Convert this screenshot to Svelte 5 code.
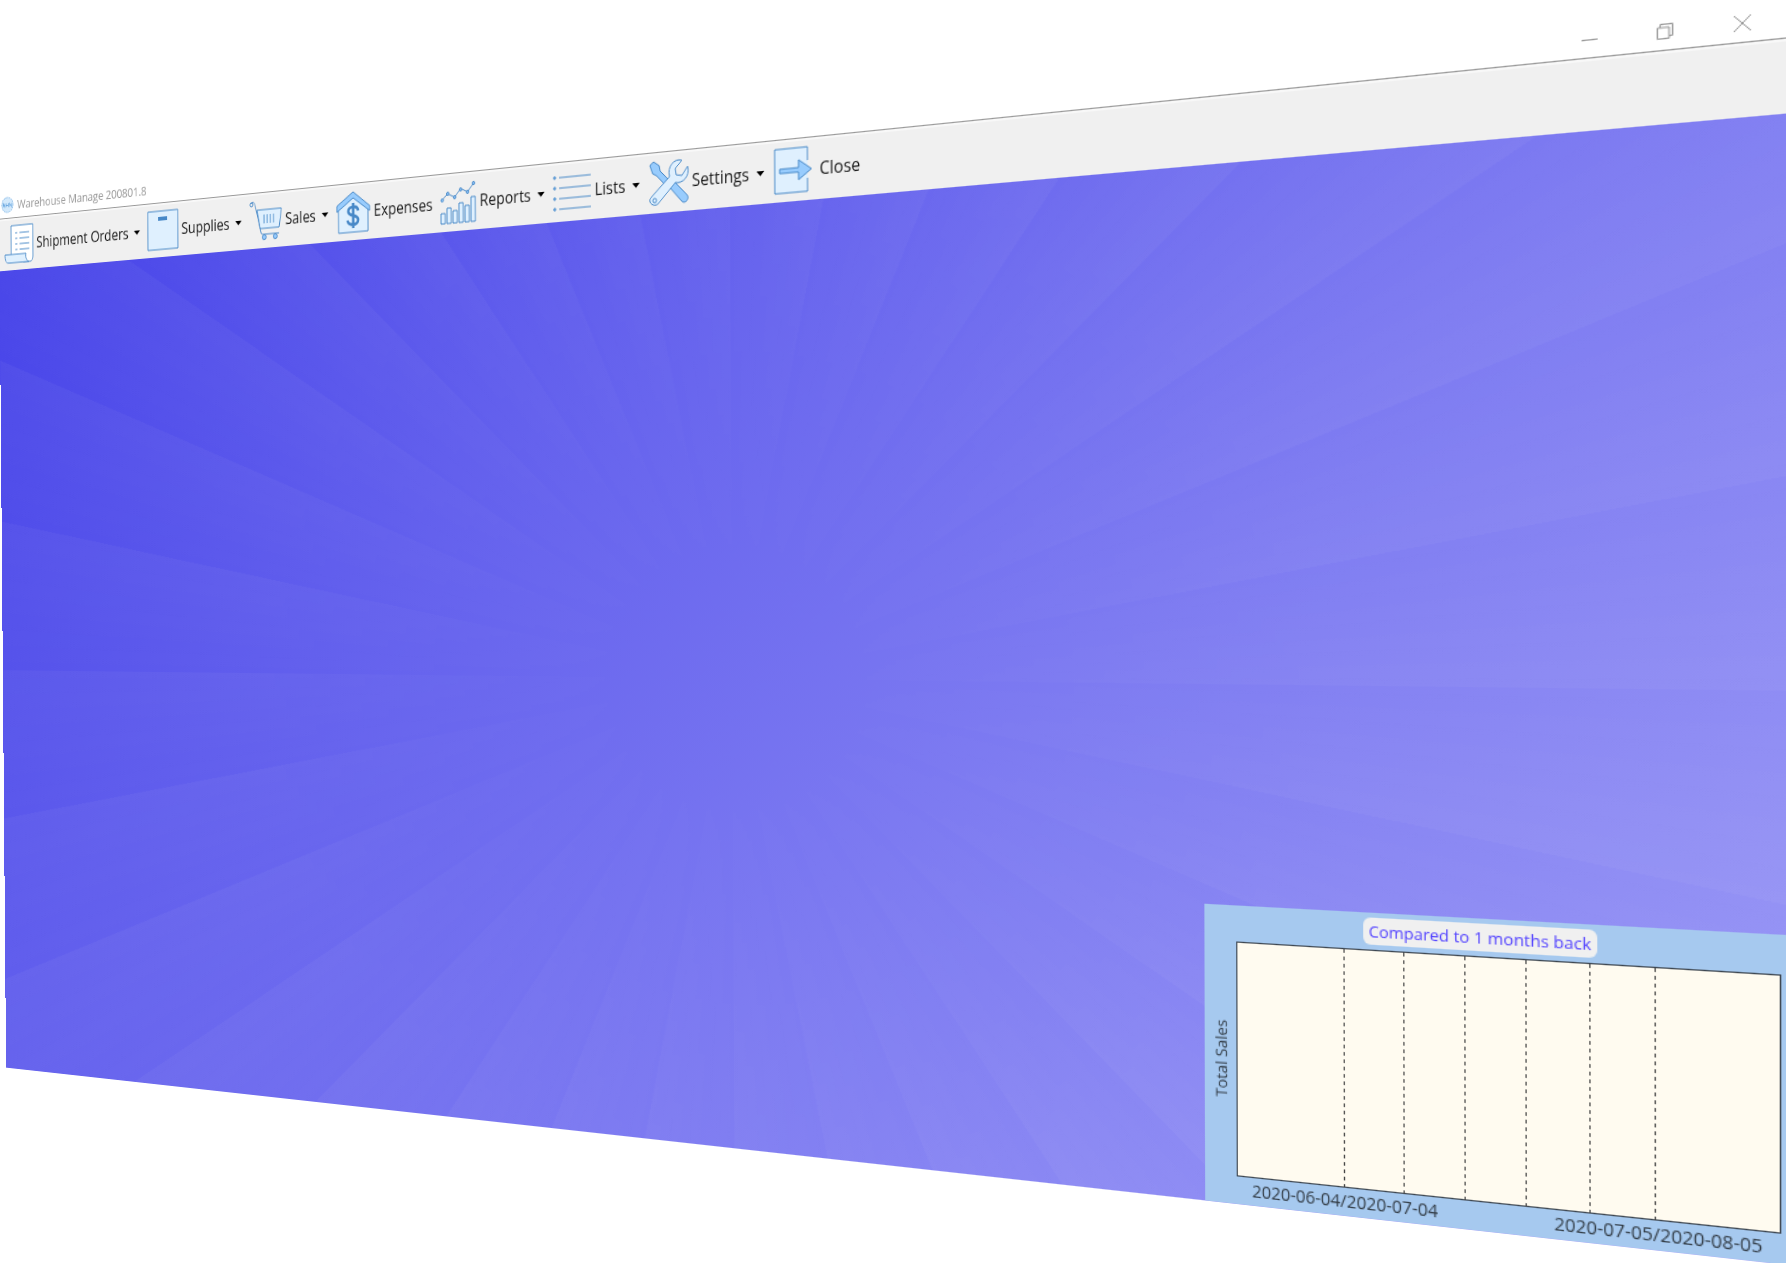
<script lang="ts">
  type Item = { label: string; icon: string; menu: boolean };

  const items: Item[] = [
    { label: 'Shipment Orders', icon: 'orders', menu: true },
    { label: 'Supplies', icon: 'supplies', menu: true },
    { label: 'Sales', icon: 'sales', menu: true },
    { label: 'Expenses', icon: 'expenses', menu: false },
    { label: 'Reports', icon: 'reports', menu: true },
    { label: 'Lists', icon: 'lists', menu: true },
    { label: 'Settings', icon: 'settings', menu: true },
    { label: 'Close', icon: 'close', menu: false }
  ];
  const periods = ['2020-06-04/2020-07-04', '2020-07-05/2020-08-05'];
  const gridLines = [0, 1, 2, 3, 4, 5];

  // Corners of the tilted window as fractions of the stage: TL, TR, BR, BL.
  const corners = [
    [-0.0006, 0.152],
    [1.0006, -0.0012],
    [1.0006, 1.0015],
    [0.0034, 0.8453]
  ];

  let stageW = $state(0);
  let stageH = $state(0);
  let winW = $state(0);
  let winH = $state(0);

  // Projective map from the flat window to the four corners.
  const tilt = $derived.by(() => {
    if (!stageW || !stageH || !winW || !winH) return 'none';
    const [[x0, y0], [x1, y1], [x2, y2], [x3, y3]] = corners.map(([x, y]) => [x * stageW, y * stageH]);
    const dx1 = x1 - x2, dy1 = y1 - y2;
    const dx2 = x3 - x2, dy2 = y3 - y2;
    const sx = x0 - x1 + x2 - x3, sy = y0 - y1 + y2 - y3;
    const den = dx1 * dy2 - dx2 * dy1;
    const g = (sx * dy2 - dx2 * sy) / den;
    const h = (dx1 * sy - sx * dy1) / den;
    const m = [
      (x1 - x0 + g * x1) / winW, (y1 - y0 + g * y1) / winW, 0, g / winW,
      (x3 - x0 + h * x3) / winH, (y3 - y0 + h * y3) / winH, 0, h / winH,
      0, 0, 1, 0,
      x0, y0, 0, 1
    ];
    return `matrix3d(${m.map((n) => n.toFixed(10)).join(',')})`;
  });
</script>

<div class="stage" bind:clientWidth={stageW} bind:clientHeight={stageH}>
  <div class="window" bind:clientWidth={winW} bind:clientHeight={winH} style:transform={tilt}>
    <header class="titlebar">
      <svg class="app-icon" viewBox="0 0 20 20" aria-hidden="true">
        <circle cx="10" cy="10" r="9" fill="#d3e9fb" stroke="#7db4e6" stroke-dasharray="2 1" />
        <path d="M3.5 12.500V8l2.500 4.500V8M8 12.500V8M8 10.500h3.500M11.500 8v4.500M13.500 12.500V8l3 4.500V8" fill="none" stroke="#6da9e0" />
      </svg>
      <h1>Warehouse Manage 200801.8</h1>
      <div class="controls">
        <button aria-label="Minimize"><svg viewBox="0 0 12 12"><path d="M0 6.500h12" /></svg></button>
        <button aria-label="Restore"><svg viewBox="0 0 12 12"><path d="M.5 3h8.500v8.500H.500zM2.500 3V.500h9V9.500H9" /></svg></button>
        <button aria-label="Close window"><svg viewBox="0 0 12 12"><path d="M0 0l12 12M12 0L0 12" /></svg></button>
      </div>
    </header>

    <nav class="toolbar">
      {#each items as item}
        <button class="tool">
          <svg class="icon" viewBox="0 0 42 42" aria-hidden="true">
            {#if item.icon === 'orders'}
              <path class="white" d="M10 34V1h31v34c0 3-1 6-4 6H28z" />
              <path class="light" d="M1 32h30c-1 5 1 8 4 9H6c-4 0-5-4-5-9z" />
              <path class="line" d="M16 9h3M22 9h14M16 15h3M22 15h14M16 21h3M22 21h14M16 27h3M22 27h14" />
            {:else if item.icon === 'supplies'}
              <path class="light" d="M1 1h40v40H1z" />
              <path class="thick" d="M15 9h12" />
            {:else if item.icon === 'sales'}
              <path class="light" d="M10 10h31l-3 19H14z" />
              <circle class="line" cx="3" cy="4" r="2" />
              <path class="line" d="M2 3c3-3 5-1 6 3l7 27c0 2 2 2 4 2h19M19 15v9M23 15v9M27 15v9M31 15v9" />
              <circle class="mid" cx="19" cy="38" r="2.500" /><circle class="mid" cx="33" cy="38" r="2.500" />
            {:else if item.icon === 'expenses'}
              <path class="light" d="M3 16L21 3l18 13v25H3z" />
              <path class="mid" d="M1 14L21 1l20 15v5L21 7 1 20z" />
              <path class="dollar" d="M27 20c-1-6-12-5-12 0 0 6 12 3 12 9 0 6-12 6-13 0M21 12v25" />
            {:else if item.icon === 'reports'}
              <path class="light" d="M1 31h5v10H1zM8 26h5v15H8zM15 29h5v12h-5zM22 22h5v19h-5zM29 25h5v16h-5zM36 17h5v24h-5z" />
              <path class="line" d="M2 18l7-6 8 4 7-8 8 4 7-8" />
              <circle class="mid" cx="2.500" cy="18" r="1.500" /><circle class="mid" cx="9" cy="12" r="1.500" /><circle class="mid" cx="17" cy="16" r="1.500" />
              <circle class="mid" cx="24" cy="9" r="1.500" /><circle class="mid" cx="32" cy="12" r="1.500" /><circle class="mid" cx="39" cy="4" r="1.500" />
            {:else if item.icon === 'lists'}
              <path class="line" d="M7 7h35M7 17h35M7 27h35M7 37h35" />
              <circle class="mid" cx="2" cy="7" r="1.200" /><circle class="mid" cx="2" cy="17" r="1.200" /><circle class="mid" cx="2" cy="27" r="1.200" /><circle class="mid" cx="2" cy="37" r="1.200" />
            {:else if item.icon === 'settings'}
              <path class="mid" d="M1 4l4-3 6 4 1 5 13 13-4 4L8 14 4 12z" />
              <path class="mid" d="M23 27l5-5 12 12c4 4-2 9-5 6z" />
              <path class="light" d="M2 34l20-18c-3-9 5-17 13-14l-7 7 1 6 6 1 6-8c3 9-5 16-13 14L10 40c-5 4-12-2-8-6z" />
              <circle class="light" cx="6" cy="37" r="2" />
            {:else}
              <path class="light" d="M34 13V1H1v40h33V29" />
              <path class="mid" d="M6 19h19v-7l13 9-13 9v-7H6z" />
            {/if}
          </svg>
          <span>{item.label}</span>
          {#if item.menu}<i class="arrow"></i>{/if}
        </button>
      {/each}
    </nav>

    <main class="canvas">
      <section class="chart" aria-label="Total sales comparison">
        <h2>Compared to 1 months back</h2>
        <div class="y-label"><span>Total Sales</span></div>
        <div class="plot">
          {#each gridLines as line (line)}<div class="grid-line"></div>{/each}
        </div>
        <div class="x-labels">
          {#each periods as period}<span>{period}</span>{/each}
        </div>
      </section>
    </main>
  </div>
</div>

<style>
  :global(body) {
    margin: 0;
    background: #fff;
  }
  .stage {
    height: 100vh;
    overflow: hidden;
    font-family: 'Open Sans', 'Noto Sans', sans-serif;
  }
  .window {
    display: flex;
    flex-direction: column;
    width: 100%;
    height: 75.4%;
    transform-origin: 0 0;
  }
  button {
    display: flex;
    align-items: center;
    padding: 0;
    border: 0;
    background: none;
    color: inherit;
    font: inherit;
  }
  .titlebar {
    display: flex;
    align-items: center;
    flex: none;
    height: 29px;
    padding: 0 4px 0 3px;
    background: #fff;
    color: #999;
  }
  .app-icon {
    width: 18px;
    height: 18px;
    margin-right: 5px;
  }
  h1 {
    margin: 0;
    font-size: 13px;
    font-weight: 400;
    line-height: 20px;
  }
  .controls {
    display: flex;
    align-self: stretch;
    margin-left: auto;
  }
  .controls button {
    justify-content: center;
    width: 55px;
  }
  .controls svg {
    width: 12px;
    height: 12px;
    fill: none;
    stroke: #999;
    stroke-width: 1;
  }
  .toolbar {
    display: flex;
    flex: none;
    gap: 9px;
    box-sizing: border-box;
    height: 57px;
    padding-left: 7px;
    border-top: 1px solid #999;
    box-shadow: inset 0 2px #f8f8f8;
    background: #f0f0f0;
    color: #1a1a1a;
    font-size: 16px;
    line-height: 24px;
  }
  .tool {
    white-space: nowrap;
  }
  .icon {
    width: 42px;
    height: 42px;
    margin-right: 4px;
    overflow: visible;
    stroke: #4788c7;
    stroke-width: 1;
  }
  .white { fill: #fff; }
  .light { fill: #dff0fe; }
  .mid { fill: #98ccfd; }
  .line { fill: none; }
  .thick {
    stroke: #4788c7;
    stroke-width: 4;
  }
  .dollar {
    fill: none;
    stroke: #4788c7;
    stroke-width: 3;
  }
  .arrow {
    width: 9px;
    height: 5px;
    margin-left: 7px;
    background: #000;
    clip-path: polygon(0 0, 100% 0, 50% 100%);
  }
  .canvas {
    position: relative;
    display: flex;
    flex: 1;
    align-items: flex-end;
    justify-content: flex-end;
    overflow: hidden;
    background: linear-gradient(135deg, #4744e9, #9d9bf6);
  }
  .canvas::before {
    content: '';
    position: absolute;
    inset: 0;
    background: repeating-conic-gradient(rgba(255, 255, 255, 0) 0deg, rgba(255, 255, 255, 0.035) 11.25deg);
    mask-image: radial-gradient(circle, transparent 100px, #000 500px);
    scale: 1.1 1;
  }
  .chart {
    position: relative;
    display: grid;
    grid-template: 30px 196px 23px / 27px 418px;
    padding-right: 4px;
    background: #a6c9ef;
    color: #333d47;
    font-size: 14px;
    line-height: 22px;
  }
  h2 {
    grid-column: 1 / -1;
    justify-self: center;
    align-self: center;
    margin: 0;
    padding: 0 4px;
    border-radius: 6px;
    background: #f0f0f0;
    color: #5040ff;
    font-size: 13px;
    font-weight: 400;
    line-height: 22px;
  }
  .y-label {
    display: flex;
    align-items: center;
    justify-content: center;
    font-size: 13px;
  }
  .y-label span {
    writing-mode: vertical-rl;
    rotate: 180deg;
    white-space: nowrap;
  }
  .plot {
    display: flex;
    justify-content: space-between;
    padding: 0 88px;
    border: 1px solid #3d4650;
    background: #fffbf0;
  }
  .grid-line {
    width: 1px;
    margin-bottom: -3px;
    background: repeating-linear-gradient(#444 0 3px, transparent 3px 6px);
  }
  .x-labels {
    display: flex;
    grid-column: 2;
    justify-content: space-between;
    padding: 0 13px;
  }
</style>
